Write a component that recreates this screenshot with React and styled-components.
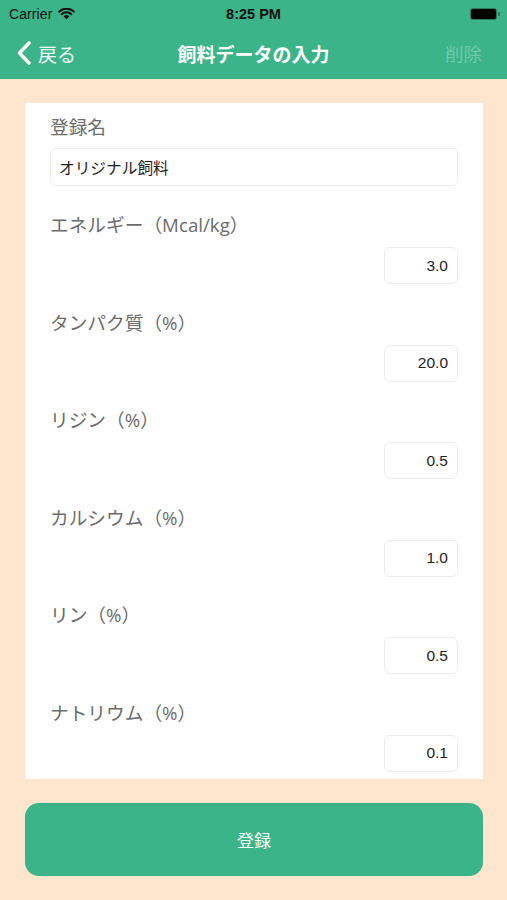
import React from 'react'
import styled, { createGlobalStyle } from 'styled-components'

const fields = [
  { label: 'エネルギー（Mcal/kg）', value: '3.0' },
  { label: 'タンパク質（%）', value: '20.0' },
  { label: 'リジン（%）', value: '0.5' },
  { label: 'カルシウム（%）', value: '1.0' },
  { label: 'リン（%）', value: '0.5' },
  { label: 'ナトリウム（%）', value: '0.1' },
]

const App = () => {
  return (
    <Screen>
      <GlobalStyle />
      <Header>
        <StatusBar>
          <Carrier>
            Carrier
            <svg width="17" height="12" viewBox="0 0 17 12">
              <path d="M8.5 11.5 L5.6 8.3 A4.2 4.2 0 0 1 11.4 8.3 Z" fill="#111" />
              <path d="M3.6 6.2 A7 7 0 0 1 13.4 6.2" stroke="#111" strokeWidth="2" fill="none" strokeLinecap="round" />
              <path d="M1.2 3.6 A10.5 10.5 0 0 1 15.8 3.6" stroke="#111" strokeWidth="2" fill="none" strokeLinecap="round" />
            </svg>
          </Carrier>
          <Clock>8:25 PM</Clock>
          <Battery>
            <BatteryBody />
            <BatteryNub />
          </Battery>
        </StatusBar>
        <NavBar>
          <BackButton>
            <svg width="14" height="24" viewBox="0 0 14 24">
              <path d="M12 2 L2.5 12 L12 22" stroke="#fff" strokeWidth="3.4" fill="none" strokeLinecap="round" strokeLinejoin="round" />
            </svg>
            戻る
          </BackButton>
          <NavTitle>飼料データの入力</NavTitle>
          <DeleteButton>削除</DeleteButton>
        </NavBar>
      </Header>

      <Body>
        <FormCard>
          <Label>登録名</Label>
          <NameField>オリジナル飼料</NameField>
          {fields.map((f) => (
            <Row key={f.label}>
              <Label>{f.label}</Label>
              <ValueField>{f.value}</ValueField>
            </Row>
          ))}
        </FormCard>
        <SubmitButton>登録</SubmitButton>
      </Body>
    </Screen>
  )
}

/* global */
const GlobalStyle = createGlobalStyle`
  body {
    margin: 0;
    background: #fde6cd;
    font-family: "Liberation Sans", "Noto Sans CJK JP", sans-serif;
  }
`

const Screen = styled.div`
  width: 507px;
  height: 900px;
  background: #fde6cd;
  display: flex;
  flex-direction: column;
`

/* header */
const Header = styled.div`
  background: #3bb48a;
  height: 79px;
  display: flex;
  flex-direction: column;
`

const StatusBar = styled.div`
  height: 27px;
  display: flex;
  align-items: center;
  justify-content: space-between;
  padding: 0 7px 0 9px;
  position: relative;
  font-size: 14px;
  color: #111;
`

const Carrier = styled.div`
  display: flex;
  align-items: center;
  gap: 6px;
  letter-spacing: 0.1px;
`

const Clock = styled.div`
  position: absolute;
  left: 0;
  right: 0;
  text-align: center;
  font-weight: bold;
  font-size: 14.5px;
`

const Battery = styled.div`
  display: flex;
  align-items: center;
  gap: 1px;
`

const BatteryBody = styled.div`
  width: 25px;
  height: 10px;
  background: #000;
  border: 1px solid #2a7a5e;
  border-radius: 3px;
`

const BatteryNub = styled.div`
  width: 2px;
  height: 4px;
  background: #2a7a5e;
  border-radius: 0 1px 1px 0;
`

const NavBar = styled.div`
  flex: 1;
  display: flex;
  align-items: center;
  justify-content: space-between;
  padding: 0 25px 0 17px;
  position: relative;
  color: #fff;
  font-size: 19px;
`

const BackButton = styled.div`
  display: flex;
  align-items: center;
  gap: 7px;
  color: #f0faf6;
`

const NavTitle = styled.div`
  position: absolute;
  left: 0;
  right: 0;
  text-align: center;
  font-weight: bold;
  pointer-events: none;
`

const DeleteButton = styled.div`
  color: rgba(255, 255, 255, 0.28);
  font-size: 18.5px;
`

/* form */
const Body = styled.div`
  padding: 24px 24px 0 25px;
  display: flex;
  flex-direction: column;
`

const FormCard = styled.div`
  background: #fff;
  padding: 9px 25px 7px 25px;
  display: flex;
  flex-direction: column;
`

const Label = styled.div`
  height: 30px;
  line-height: 30px;
  font-family: "Open Sans", "Noto Sans CJK JP", sans-serif;
  font-size: 18.7px;
  color: #6b6b6b;
`

const NameField = styled.div`
  margin-top: 6px;
  height: 38px;
  box-sizing: border-box;
  border: 1px solid #ececec;
  border-radius: 6px;
  padding: 0 8px;
  display: flex;
  align-items: center;
  font-size: 15.7px;
  color: #1e1e1e;
  margin-bottom: 24px;
`

const Row = styled.div`
  display: flex;
  flex-direction: column;
  & + & {
    margin-top: 23.5px;
  }
`

const ValueField = styled.div`
  align-self: flex-end;
  margin-top: 7px;
  width: 74px;
  height: 37px;
  box-sizing: border-box;
  border: 1px solid #ececec;
  border-radius: 6px;
  padding: 0 9px;
  display: flex;
  align-items: center;
  justify-content: flex-end;
  font-size: 15.5px;
  color: #1e1e1e;
`

const SubmitButton = styled.div`
  margin-top: 24px;
  height: 73px;
  background: #3bb48a;
  border-radius: 14px;
  display: flex;
  align-items: center;
  justify-content: center;
  color: #fff;
  font-size: 17px;
`

export default App
